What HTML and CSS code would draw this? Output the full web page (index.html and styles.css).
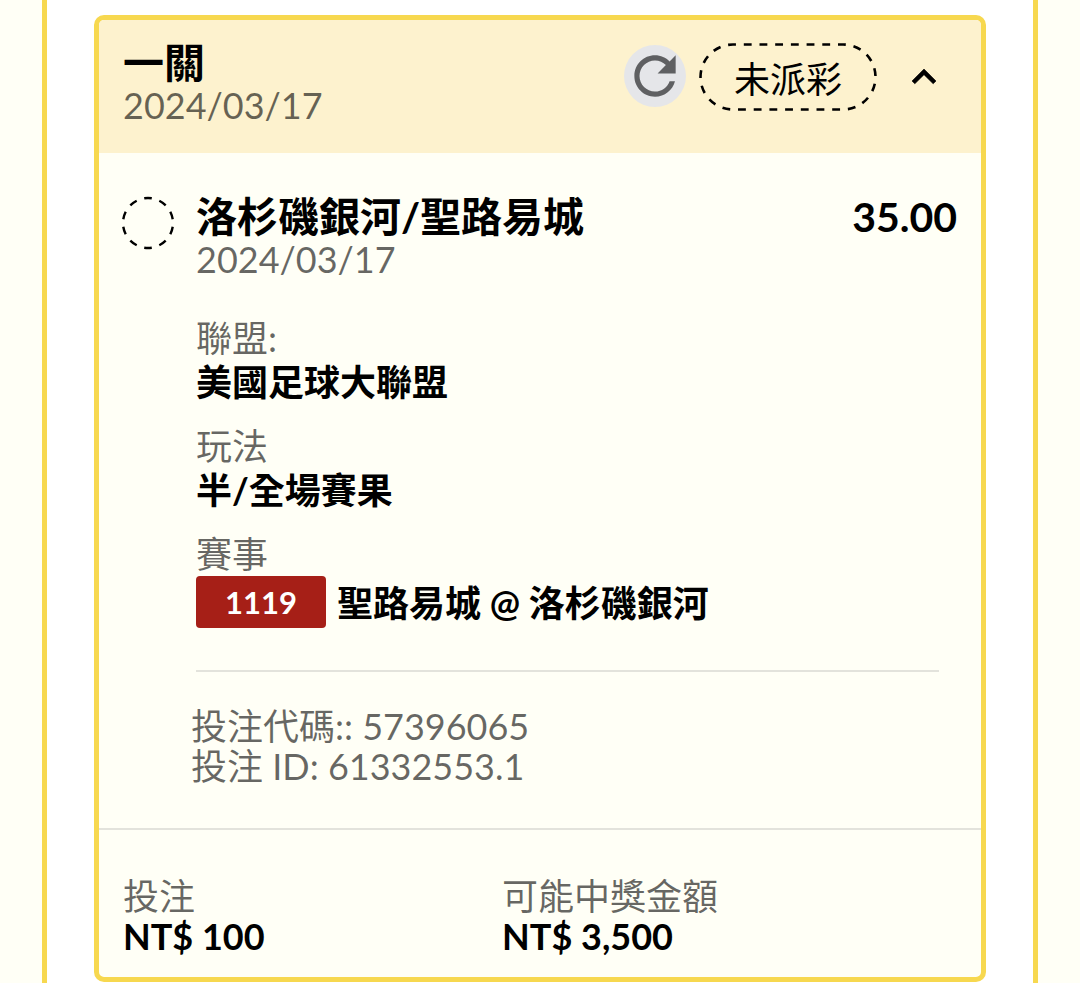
FILE: index.html
```html
<!DOCTYPE html>
<html lang="zh-TW">
<head>
<meta charset="utf-8">
<meta name="viewport" content="width=device-width, initial-scale=1">
<title>投注紀錄</title>
<link rel="stylesheet" href="styles.css">
</head>
<body>

<main class="panel">
  <article class="card">

    <header class="card-header">
      <div class="card-heading">
        <h1 class="title">一關</h1>
        <div class="date">2024/03/17</div>
      </div>
      <button type="button" class="refresh" aria-label="重新整理">
        <svg viewBox="0 0 24 24"><path d="M17.65 6.35C16.2 4.9 14.21 4 12 4c-4.42 0-7.99 3.58-7.99 8s3.57 8 7.99 8c3.73 0 6.84-2.55 7.73-6h-2.08c-.82 2.33-3.04 4-5.65 4-3.31 0-6-2.69-6-6s2.69-6 6-6c1.66 0 3.14.69 4.22 1.78L13 11h7V4l-2.35 2.35z"/></svg>
      </button>
      <div class="status">
        <svg class="status-outline" viewBox="0 0 178 68"><rect x="1.5" y="1.5" width="175" height="65" rx="32.5" pathLength="432"/></svg>
        未派彩
      </div>
      <button type="button" class="toggle" aria-label="收合" aria-expanded="true">
        <svg viewBox="0 0 24 24"><path d="M12 8l-6 6 1.41 1.41L12 10.83l4.59 4.58L18 14z"/></svg>
      </button>
    </header>

    <section class="bet">
      <svg class="bet-mark" viewBox="0 0 54 54"><circle cx="27" cy="27" r="25" pathLength="160"/></svg>
      <div class="bet-content">
        <div class="bet-top">
          <h2 class="title">洛杉磯銀河/聖路易城</h2>
          <div class="title">35.00</div>
        </div>
        <div class="date">2024/03/17</div>

        <dl class="details">
          <dt>聯盟:</dt>
          <dd>美國足球大聯盟</dd>
          <dt>玩法</dt>
          <dd>半/全場賽果</dd>
          <dt>賽事</dt>
          <dd class="match"><span class="match-code">1119</span><span class="match-name">聖路易城 @ 洛杉磯銀河</span></dd>
        </dl>

        <div class="codes">
          <div>投注代碼:: 57396065</div>
          <div>投注 ID: 61332553.1</div>
        </div>
      </div>
    </section>

    <footer class="totals">
      <div>
        <div class="total-label">投注</div>
        <div class="total-value">NT$ 100</div>
      </div>
      <div>
        <div class="total-label">可能中獎金額</div>
        <div class="total-value">NT$ 3,500</div>
      </div>
    </footer>

  </article>
</main>

</body>
</html>
```

FILE: styles.css
```css
* { box-sizing: border-box; }
body { margin: 0; background: #fffff6; color: #000; font-family: Lato, "Noto Sans CJK TC", sans-serif; font-size: 36px; line-height: 40px; }
h1, h2, dl, dd { margin: 0; }
button { border: 0; padding: 0; cursor: pointer; }
svg { display: block; }

.panel { min-height: 100vh; margin: 0 42px; padding: 15px 47px 0; background: #fff; border: solid #f7d84f; border-width: 0 5px; }
.card { background: #fffff6; border: 5px solid #f7d84f; border-radius: 10px; overflow: hidden; }

.title { font-size: 41px; line-height: 44px; font-weight: bold; }
.date { color: rgba(0, 0, 0, .6); }

/* header */
.card-header { display: flex; align-items: center; padding: 21px 33px 28px 24px; background: #fdf2ce; }
.card-heading { flex: 1; }
.refresh { width: 62px; height: 62px; margin-bottom: 14px; border-radius: 50%; background: #e5e6e9; }
.refresh svg { width: 62px; height: 62px; fill: #5f6062; }
.status { position: relative; width: 178px; margin: 0 23px 10px 13px; padding-top: 2px; line-height: 68px; text-align: center; }
.status-outline { position: absolute; top: 0; left: 0; width: 178px; height: 68px; fill: none; stroke: #000; stroke-width: 2.6; stroke-dasharray: 8 8; stroke-dashoffset: -11; }
.toggle { margin-bottom: 12px; background: none; }
.toggle svg { width: 48px; height: 48px; fill: #000; stroke: #000; stroke-width: .3; }

/* bet */
.bet { display: flex; align-items: flex-start; gap: 21px; padding: 42px 24px 42px 22px; border-bottom: 2px solid #e3e3dc; }
.bet-mark { flex: none; width: 54px; height: 54px; margin-top: 1px; fill: none; stroke: #000; stroke-width: 2.4; stroke-dasharray: 8 8; stroke-dashoffset: -36; }
.bet-content { flex: 1; }
.bet-top { display: flex; justify-content: space-between; }

.details { margin: 37px 18px 0 0; padding-bottom: 42px; border-bottom: 2px solid #e3e3dc; }
.details dt { color: rgba(0, 0, 0, .6); line-height: 44px; }
.details dd { margin-bottom: 20px; line-height: 44px; font-weight: bold; }
.details .match { display: flex; align-items: center; gap: 11px; margin: 0; line-height: 52px; }
.match-code { width: 130px; border-radius: 4px; background: #a61f17; color: #fff; font-size: 31px; text-align: center; }
.match-name { padding-top: 2px; line-height: 48px; }

.codes { margin: 34px 0 0 -5px; color: rgba(0, 0, 0, .6); }

/* totals */
.totals { display: grid; grid-template-columns: 5fr 6fr; padding: 46px 24px 21px; }
.total-label { color: rgba(0, 0, 0, .6); }
.total-value { font-weight: bold; }
```
